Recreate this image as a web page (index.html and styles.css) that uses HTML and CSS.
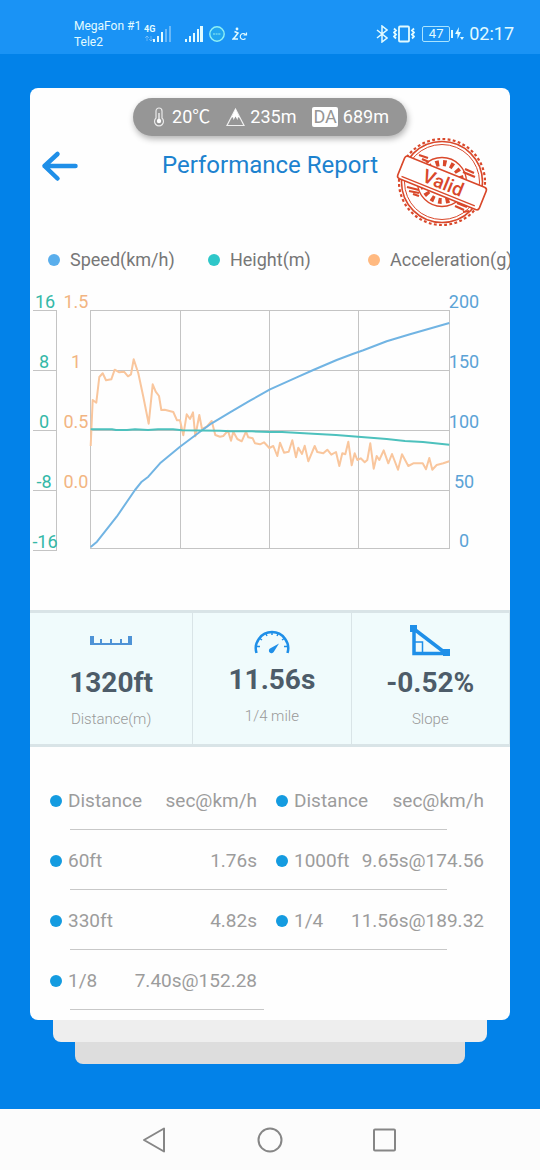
FILE: index.html
```html
<!DOCTYPE html>
<html lang="en">
<head>
    <meta charset="UTF-8">
    <meta name="viewport" content="width=device-width, initial-scale=1.0">
    <title>Performance Report</title>
    <link rel="stylesheet" href="styles.css">
</head>
<body>
    <div class="status-bar">
        <div class="carriers">
            <span>MegaFon #1</span>
            <span>Tele2</span>
        </div>
        <svg class="status-4g" width="28" height="20" viewBox="0 0 28 20">
            <text x="0" y="8" class="tiny">4G</text>
            <path d="M3 12v5M1 14l2-2 2 2M7 12v5M5 15l2 2 2-2" fill="none" stroke="#fff" stroke-opacity=".3"/>
            <path d="M9 15h2v3H9zM13 12h2v6h-2zM17 8h2v10h-2z" fill="#e2fbff"/>
            <path d="M21 5h2v13h-2zM25 2h2v16h-2z" fill="#fff" fill-opacity=".35"/>
        </svg>
        <svg class="status-signal" width="18" height="18" viewBox="0 0 18 18">
            <path d="M0 14h2v3H0zM4 11h2v6H4zM8 8h2v9H8zM12 4h2v13h-2zM15 1h3v16h-3z" fill="#e2fbff"/>
        </svg>
        <svg class="status-app" width="16" height="16" viewBox="0 0 16 16">
            <circle cx="8" cy="8" r="7.2" fill="#22a6f0" stroke="#8ff0f5" stroke-width="1.4"/>
            <path d="M4 8h8" stroke="#6fd6ee" stroke-width="1.4" stroke-dasharray="2 .6"/>
        </svg>
        <svg class="status-sync" width="16" height="16" viewBox="0 0 16 16">
            <circle cx="5" cy="3" r="1.4" fill="#e2fbff"/>
            <path d="M2.500 5.500L6 7l-3 4-2 2h5" fill="none" stroke="#e2fbff" stroke-width="1.5"/>
            <path d="M13.500 8.500a3 3 0 1 0 0 4M14.500 6.500v2.500h-3" fill="none" stroke="#e2fbff" stroke-width="1.2"/>
        </svg>
        <div class="status-right">
            <svg width="12" height="18" viewBox="0 0 12 18">
                <path d="M1 5l10 8-5 4V1l5 4-10 8" fill="none" stroke="#e2fbff" stroke-width="1.5"/>
            </svg>
            <svg width="22" height="18" viewBox="0 0 22 18">
                <rect x="6" y="1.5" width="10" height="15" rx="1" fill="none" stroke="#e2fbff" stroke-width="1.8"/>
                <path d="M1 3.500l2 2-2 2 2 2-2 2 2 2M21 3.500l-2 2 2 2-2 2 2 2-2 2" fill="none" stroke="#e2fbff" stroke-width="1.8"/>
            </svg>
            <span class="battery">47</span>
            <svg class="bolt" width="9" height="16" viewBox="0 0 9 16">
                <path d="M4 1L0 8h2.500v5L6 6H3.500zM7 9v5M5 11l2 3 2-3z" fill="#e2fbff"/>
            </svg>
            <span class="clock">02:17</span>
        </div>
    </div>

    <main class="page">
        <section class="card">
            <div class="conditions">
                <span class="condition">
                    <svg width="16" height="20" viewBox="-2 0 16 20">
                        <path d="M3 11V4a3 3 0 0 1 6 0v7a4.500 4.500 0 1 1-6 0z" fill="none" stroke="#fff" stroke-opacity=".8" stroke-width="1.2"/>
                        <path d="M6 6v8" stroke="#fff" stroke-width="1.2"/>
                        <circle cx="6" cy="14" r="2.2" fill="#fff"/>
                    </svg>
                    20℃
                </span>
                <span class="condition">
                    <svg width="19" height="20" viewBox="0 0 19 20">
                        <path d="M9.500 2L1 18.500h17z" fill="none" stroke="#fff" stroke-opacity=".85" stroke-width="1.2"/>
                        <path d="M9.500 2L5 11.500l2-1.500.5 3 2-3.500 2 3.500.5-3 2 1.500z" fill="#fff"/>
                    </svg>
                    235m
                </span>
                <span class="condition"><b class="da">DA</b>689m</span>
            </div>

            <header class="report-header">
                <button class="back" type="button" aria-label="Back">
                    <svg width="38" height="32" viewBox="0 0 38 32">
                        <path d="M34.500 16H3.500M16.500 4L3.500 16l13 12.500" fill="none" stroke="#1f8fe8" stroke-width="4.5" stroke-linecap="round" stroke-linejoin="round"/>
                    </svg>
                </button>
                <h1>Performance Report</h1>
                <svg class="stamp" width="94" height="92" viewBox="0 0 94 92">
                    <g fill="none" stroke="#d9482b">
                        <circle cx="47" cy="46" r="43" stroke-width="2.2" stroke-dasharray="2.8 2.4"/>
                        <circle cx="47" cy="46" r="40.500" stroke-width="1.6"/>
                        <circle cx="47" cy="46" r="37.500" stroke-width="1"/>
                        <circle cx="47" cy="46" r="24.500" stroke-width="1.3"/>
                        <circle cx="47" cy="46" r="19" stroke-width="6" stroke-dasharray="3.5 4"/>
                        <path d="M24 19l9 3M27 23l7 3M68 36l12 5M70 33l9 4M12 51l12 3M14 55l10 2M18 58l6 2M60 70l9 4M62 67l10 4M68 76l6-1" stroke-width="2.2"/>
                    </g>
                    <g transform="rotate(22 47 47)">
                        <rect x="3" y="35" width="88" height="24" rx="3" fill="#fff" stroke="#d9482b" stroke-width="1.6"/>
                        <path d="M7 56h79" stroke="#d9482b" stroke-width="1.3"/>
                        <text x="48" y="53" class="stamp-text">Valid</text>
                    </g>
                </svg>
            </header>

            <ul class="legend">
                <li><i class="dot speed"></i>Speed(km/h)</li>
                <li><i class="dot height"></i>Height(m)</li>
                <li><i class="dot accel"></i>Acceleration(g)</li>
            </ul>

            <svg class="chart" viewBox="0 0 480 270">
                <g class="grid">
                    <path d="M3 20.500h23.500M3 80.500h23.500M3 140.500h23.500M3 200.500h23.500M3 260.500h23.500M26.500 20v241"/>
                    <path d="M60 20.500h360M60 80.500h360M60 140.500h360M60 200.500h360M60 258.500h360"/>
                    <path d="M60.500 20v239M150.500 20v239M239.500 20v239M328.500 20v239M419.500 20v239"/>
                </g>
                <polyline class="line-accel" points="60.7,156 61.5,137 62.7,110 66.3,112.7 69.3,87 72.7,83.3 76,90.3 81.3,89.3 84.7,79.7 89.3,82.3 94,81.7 98,86.3 101,84.3 103.7,69.3 108.3,83.3 113.3,106.7 118.7,133.7 122.7,94.3 125.7,101.7 129,106 131.3,120 134.7,119.7 143.3,122 147,130.3 150,130.3 153.3,145.3 156.7,124.3 160,129 163,122.3 165.3,146.3 169.3,125 172,139 176.7,136.7 181.7,131 185.3,145 190,146.7 193.3,146 198,140.7 201,150.7 203.3,141.7 207.3,149 211.7,151.3 216,141.7 218.3,147.3 222.7,148.3 225,153.3 230,154.3 234,152.3 239.3,158 243.3,156 247.3,166 250,152.7 254,162.7 258.7,161.7 262.3,150.3 266,167.3 268.3,157.7 272,164 274.7,155.7 278.3,171.3 284.7,156 287.3,162 293.3,163.3 297.3,159.7 301.3,164.7 306,162 309.3,176 312.3,163.3 315.3,164.3 318.3,151.7 321.7,175.3 324.7,163.3 327.3,170 330.7,168.3 334.7,172.3 337.3,170 340.3,153.3 343.7,178.7 346.7,166 349.3,170 353.7,160.3 358.3,173.3 362,164 368,179.7 372,164.3 378.3,176 383.3,173.3 392.7,173.3 396,179.3 399.3,168 402.3,179.7 406.7,175 413.3,173.3 419.3,171.3"/>
                <polyline class="line-speed" points="60.7,257 67,251.7 86.7,226.7 105,200 111.7,191.7 118.3,186.7 130,173.3 150,156.7 170,141.7 181.7,133.3 200,122.3 220,110.7 240,99.3 266.7,87.3 283.3,80 306.7,70 323.3,63.7 333.3,60.3 356.7,51.3 380,44.3 419.3,33"/>
                <polyline class="line-height" points="60.7,139.3 82,139.3 86,140 97,140 105,139.3 118,140 128,139.3 143,139.3 152,140.3 190,140.7 200,141.3 222,141.3 240,142 252,142 283,143.7 306,145 328,146.7 356.7,149 375,151 393,152 419.3,154.7"/>
                <g class="axis-height">
                    <text x="15" y="18">16</text>
                    <text x="14" y="78">8</text>
                    <text x="14" y="138">0</text>
                    <text x="14" y="198">-8</text>
                    <text x="15" y="258">-16</text>
                </g>
                <g class="axis-accel">
                    <text x="46" y="18">1.5</text>
                    <text x="46" y="78">1</text>
                    <text x="46" y="138">0.5</text>
                    <text x="46" y="198">0.0</text>
                </g>
                <g class="axis-speed">
                    <text x="434" y="18">200</text>
                    <text x="434" y="78">150</text>
                    <text x="434" y="138">100</text>
                    <text x="434" y="198">50</text>
                    <text x="434" y="257">0</text>
                </g>
            </svg>

            <div class="stats">
                <div class="stat">
                    <svg width="42" height="32" viewBox="0 0 42 32">
                        <path d="M0 11h4v7h6v-4h2v4h8v-4h2v4h8v-4h2v4h6v-7h4v9H0z" fill="#4f93d6"/>
                    </svg>
                    <strong>1320ft</strong>
                    <span>Distance(m)</span>
                </div>
                <div class="stat">
                    <svg width="38" height="29" viewBox="0 0 38 29">
                        <path d="M3.500 28A16.200 16.200 0 1 1 34.500 28" fill="none" stroke="#1f8fe8" stroke-width="2.5"/>
                        <path d="M3 21.500h4M6 13l3 2M12.500 8l1.500 3M19 6v4M25.500 8l-1.500 3M32 13l-3 2M35 21.500h-4" stroke="#1f8fe8" stroke-width="1.5"/>
                        <path d="M26 18.500l-5.300 8.500a2.600 2.600 0 1 1-3.700-3.500z" fill="#1f8fe8"/>
                    </svg>
                    <strong>11.56s</strong>
                    <span>1/4 mile</span>
                </div>
                <div class="stat">
                    <svg width="40" height="32" viewBox="0 0 40 32">
                        <path d="M4 4v24.500h32L4 4" fill="none" stroke="#1f8fe8" stroke-width="3.5"/>
                        <path d="M0 0h7v7H0zM33 24h7v7h-7z" fill="#1f8fe8"/>
                        <path d="M4 17h8.500v11" fill="none" stroke="#1f8fe8" stroke-width="1.5"/>
                    </svg>
                    <strong>-0.52%</strong>
                    <span>Slope</span>
                </div>
            </div>

            <table class="results">
                <thead>
                    <tr>
                        <th><div class="split"><span>Distance</span><span>sec@km/h</span></div></th>
                        <th><div class="split"><span>Distance</span><span>sec@km/h</span></div></th>
                    </tr>
                </thead>
                <tbody>
                    <tr>
                        <td><div class="split"><span>60ft</span><span>1.76s</span></div></td>
                        <td><div class="split"><span>1000ft</span><span>9.65s@174.56</span></div></td>
                    </tr>
                    <tr>
                        <td><div class="split"><span>330ft</span><span>4.82s</span></div></td>
                        <td><div class="split"><span>1/4</span><span>11.56s@189.32</span></div></td>
                    </tr>
                    <tr class="half">
                        <td><div class="split"><span>1/8</span><span>7.40s@152.28</span></div></td>
                        <td></td>
                    </tr>
                </tbody>
            </table>
        </section>
        <div class="sheet sheet-mid"></div>
        <div class="sheet sheet-back"></div>
    </main>

    <nav class="nav-bar">
        <button type="button" aria-label="Back">
            <svg width="26" height="26" viewBox="0 0 26 26"><path d="M22 1.500v23L2 13z"/></svg>
        </button>
        <button type="button" aria-label="Home">
            <svg width="26" height="26" viewBox="0 0 26 26"><circle cx="13" cy="13" r="11.5"/></svg>
        </button>
        <button type="button" aria-label="Recent apps">
            <svg width="26" height="26" viewBox="0 0 26 26"><rect x="2" y="2.5" width="21" height="21" rx="1"/></svg>
        </button>
    </nav>
</body>
</html>
```

FILE: styles.css
```css
* {
    box-sizing: border-box;
}
body {
    margin: 0;
    min-height: 100vh;
    display: flex;
    flex-direction: column;
    font-family: Roboto, "Noto Sans CJK SC", sans-serif;
    background-color: #0282e9;
}
svg {
    display: block;
    flex-shrink: 0;
}
button {
    padding: 0;
    border: none;
    background: none;
    cursor: pointer;
}

/* status bar */
.status-bar {
    display: flex;
    align-items: center;
    height: 54px;
    padding: 14px 26px 0 74px;
    background-color: #1a93f5;
    color: #e2fbff;
}
.carriers {
    display: flex;
    flex-direction: column;
    font-size: 12px;
    line-height: 16px;
    white-space: nowrap;
}
.tiny {
    font-size: 9px;
    font-weight: 700;
    fill: #e2fbff;
}
.status-4g {
    margin-left: 3px;
}
.status-signal {
    margin-left: 13px;
}
.status-app {
    margin-left: 6px;
}
.status-sync {
    margin-left: 7px;
}
.status-right {
    display: flex;
    align-items: center;
    margin-left: auto;
}
.status-right > * + * {
    margin-left: 5px;
}
.battery {
    position: relative;
    width: 28px;
    border: 1px solid #a9e4ff;
    border-radius: 2px;
    font-size: 13px;
    line-height: 14px;
    text-align: center;
}
.battery::after {
    content: "";
    position: absolute;
    top: 3px;
    right: -4px;
    width: 2px;
    height: 8px;
    background-color: #e2fbff;
}
.status-right .battery {
    margin-left: 7px;
}
.clock {
    font-size: 18px;
    line-height: 20px;
}

/* card */
.page {
    flex: 1;
    padding: 34px 30px 44px;
}
.card {
    padding: 10px 0;
    border-radius: 8px;
    background-color: #fefefe;
    overflow: hidden;
}
.conditions {
    display: flex;
    justify-content: center;
    gap: 16px;
    width: fit-content;
    margin: 0 auto;
    padding: 0 18px;
    border-radius: 19px;
    background-color: #969696;
    box-shadow: 1px 3px 6px rgba(0, 0, 0, 0.3);
    color: #fff;
    font-size: 18px;
    line-height: 38px;
}
.condition {
    display: flex;
    align-items: center;
    gap: 5px;
}
.da {
    border-radius: 2px;
    padding: 0 1px;
    background-color: #fff;
    color: #969696;
    font-weight: 400;
    line-height: 20px;
}
.report-header {
    display: grid;
    grid-template-columns: 1fr auto 1fr;
    align-items: start;
}
.back {
    width: 38px;
    margin: 14px 0 0 11px;
}
h1 {
    margin: 0;
    color: #1c82cf;
    font-size: 24px;
    font-weight: 400;
    line-height: 58px;
    white-space: nowrap;
}
.stamp {
    justify-self: end;
    margin-right: 21px;
}
.stamp-text {
    font-size: 19px;
    font-weight: 500;
    fill: #d9482b;
    text-anchor: middle;
}

/* chart */
.legend {
    display: grid;
    grid-template-columns: repeat(3, calc(100% / 3));
    margin: 20px 0 18px;
    padding: 0;
    list-style: none;
    color: #777;
    font-size: 18px;
    line-height: 24px;
    white-space: nowrap;
}
.legend li {
    display: flex;
    align-items: center;
    gap: 10px;
    padding-left: 18px;
}
.dot {
    flex: none;
    width: 12px;
    height: 12px;
    border-radius: 50%;
}
.speed {
    background-color: #5aaeec;
}
.height {
    background-color: #2ec7c9;
}
.accel {
    background-color: #ffb980;
}
.chart {
    width: 100%;
    height: auto;
}
.chart text {
    font-size: 18px;
    text-anchor: middle;
}
.grid path {
    fill: none;
    stroke: #c4c4c4;
}
.chart polyline {
    fill: none;
    stroke-width: 2;
    stroke-linejoin: round;
}
.line-accel {
    stroke: #f9c69d;
}
.line-speed {
    stroke: #71b4e3;
}
.line-height {
    stroke: #4dc1bd;
}
.axis-height {
    fill: #34b8a8;
}
.axis-accel {
    fill: #f2b582;
}
.axis-speed {
    fill: #5ba3d6;
}

/* stats */
.stats {
    display: grid;
    grid-template-columns: 34fr 33fr 33fr;
    margin-top: 50px;
    border-top: 3px solid #d9e4e7;
    border-bottom: 3px solid #d9e4e7;
    background-color: #f0fbfc;
}
.stat {
    display: flex;
    flex-direction: column;
    align-items: center;
    padding: 12px 0 15px;
    border-right: 1px solid #d9e4e7;
}
.stat strong {
    margin: 8px 0;
    color: #4d5c69;
    font-size: 28px;
    line-height: 36px;
}
.stat span {
    color: #999;
    font-size: 15px;
    font-weight: 300;
    line-height: 20px;
}

/* results */
.results {
    width: calc(100% - 46px);
    margin: 23px 26px 0 20px;
    border-collapse: collapse;
    table-layout: fixed;
    color: #9c9c9c;
    font-size: 19px;
}
.results tr {
    height: 60px;
    background: linear-gradient(#c8c8c8, #c8c8c8) 20px 100% / calc(100% - 57px) 1px no-repeat;
}
.results .half {
    background-size: calc(50% - 23px) 1px;
}
.results th,
.results td {
    padding: 0 10px 0 0;
    font-weight: 400;
}
.results th + th,
.results td + td {
    padding: 0 0 0 9px;
}
.split {
    display: flex;
    align-items: center;
    justify-content: space-between;
    white-space: nowrap;
}
.split span:first-child::before {
    content: "";
    display: inline-block;
    width: 12px;
    height: 12px;
    margin-right: 6px;
    border-radius: 50%;
    background-color: #149be0;
}

/* stacked sheets under the card */
.sheet {
    height: 22px;
    border-radius: 0 0 8px 8px;
}
.sheet-mid {
    margin: 0 23px;
    background-color: #eee;
}
.sheet-back {
    margin: 0 45px;
    background-color: #ddd;
}

/* navigation bar */
.nav-bar {
    display: flex;
    justify-content: center;
    gap: 67px;
    padding: 7px 0 6px;
    background-color: #fcfcfc;
}
.nav-bar button {
    display: grid;
    place-items: center;
    width: 48px;
    height: 48px;
}
.nav-bar svg {
    fill: none;
    stroke: #868686;
    stroke-width: 2;
    stroke-linejoin: round;
}
```
